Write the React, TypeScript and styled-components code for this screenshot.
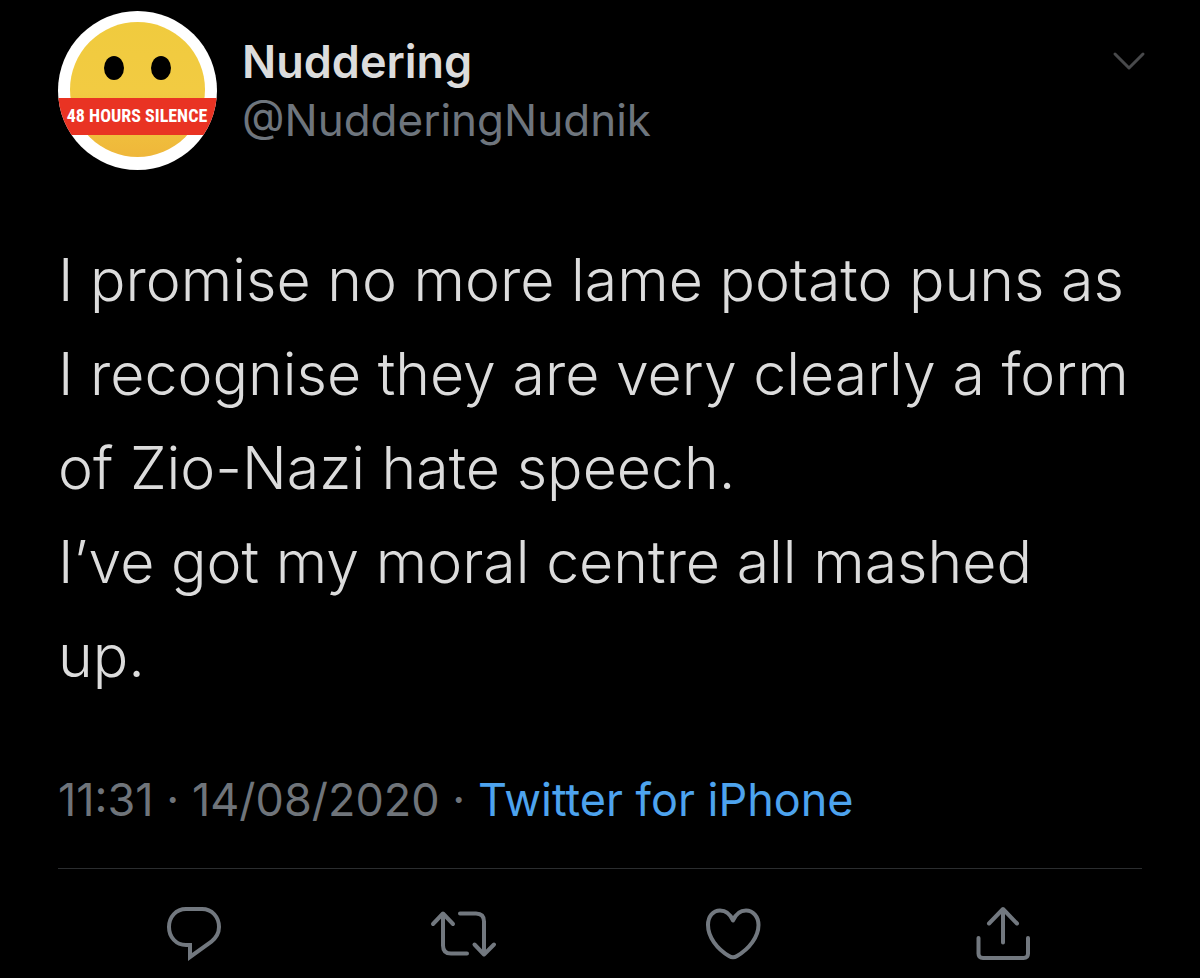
import React from "react";
import styled, { createGlobalStyle } from "styled-components";

const GlobalStyle = createGlobalStyle`
  *, *::before, *::after { box-sizing: border-box; }
  body {
    margin: 0;
    background: #000;
    font-family: Inter, "Liberation Sans", sans-serif;
  }
`;

const Tweet = styled.article`
  padding: 11px 58px 0;
  color: #dcdcdc;
`;

const Header = styled.header`
  display: flex;
  align-items: center;
  gap: 25px;
`;

const Avatar = styled.svg`
  flex: none;
  width: 159px;
  height: 159px;
`;

const BannerText = styled.text`
  font-family: "Liberation Sans Narrow", "Roboto Condensed", "Open Sans Condensed", Roboto, sans-serif;
  font-size: 18px;
  font-weight: 700;
  text-anchor: middle;
  fill: #fff;
`;

const Names = styled.div`
  flex: 1;
  min-width: 0;
  line-height: 58px;
`;

const DisplayName = styled.h1`
  margin: 0;
  font-size: 45px;
  font-weight: 600;
`;

const Handle = styled.p`
  margin: 0;
  font-size: 44px;
  color: #6e757d;
`;

const IconButton = styled.button<{ $tone?: string }>`
  display: flex;
  padding: 0;
  border: 0;
  background: none;
  color: ${({ $tone }) => $tone ?? "#72787f"};
  cursor: pointer;

  svg {
    display: block;
    overflow: visible;
    fill: none;
    stroke: currentColor;
    stroke-width: 4;
    stroke-linecap: round;
    stroke-linejoin: round;
  }
`;

const MenuSlot = styled.div`
  align-self: flex-start;
  padding-top: 35px;
`;

const Body = styled.p`
  margin: 63px 0 0;
  font-size: 59px;
  line-height: 94px;
  font-weight: 300;
`;

const Meta = styled.p`
  margin: 69px 0 0;
  padding-bottom: 40px;
  border-bottom: 1px solid #2b2d2f;
  font-size: 45px;
  line-height: 56px;
  color: #6f747a;
`;

const Source = styled.a`
  color: #4da3ee;
  text-decoration: none;
`;

const Actions = styled.footer`
  display: grid;
  grid-template-columns: repeat(4, 1fr);
  justify-items: center;
  padding: 30px 4px 0 0;
`;

const icons = [
  {
    label: "Reply",
    shape: <path d="M28 10H44C54 10 61 18 61 28C61 35 58 39 53 43L32 58V46H28C18 46 11 38 11 28C11 18 18 10 28 10Z" strokeLinejoin="miter" />,
  },
  {
    label: "Retweet",
    shape: <path d="M5 25L15 14.5L25 25M15 15V46.5Q15 54.5 23 54.5H39M32 14.5H48Q56 14.5 56 22.5V55M46.5 45.5L56 55.5L66 45.5" />,
  },
  {
    label: "Like",
    shape: <path d="M35 21.5C32 14.5 27 11.5 22 11.5C15 11.5 10 17.5 10 26C10 38 19 50 31 57Q35 59.5 39 57C51 50 60.5 38 60.5 26C60.5 17.5 55 11.5 48 11.5C43 11.5 38 14.5 35 21.5Z" />,
  },
  {
    label: "Share",
    shape: <path d="M35 43.5V10.5M21 24.5L35 10L49 24.5M10.5 39V54.5Q10.5 59 15 59H55.5Q60 59 60 54.5V39" />,
  },
];

export default function App() {
  return (
    <>
      <GlobalStyle />
      <Tweet>
        <Header>
          <Avatar viewBox="0 0 159 159" role="img" aria-label="Profile picture">
            <defs>
              <clipPath id="avatar-clip">
                <circle cx="79.5" cy="79.5" r="79.5" />
              </clipPath>
              <linearGradient id="face" x1="0" y1="0" x2="0" y2="1">
                <stop offset="0" stopColor="#f0cb3e" />
                <stop offset="0.5" stopColor="#f2cb42" />
                <stop offset="1" stopColor="#efb73a" />
              </linearGradient>
            </defs>
            <g clipPath="url(#avatar-clip)">
              <rect width="159" height="159" fill="#fff" />
              <circle cx="79.5" cy="78.5" r="67.5" fill="url(#face)" />
              <ellipse cx="56" cy="57" rx="10" ry="12" fill="#000" />
              <ellipse cx="103" cy="57" rx="10" ry="12" fill="#000" />
              <rect y="87" width="159" height="37" fill="#e93323" />
              <BannerText x="79" y="111">48 HOURS SILENCE</BannerText>
            </g>
          </Avatar>
          <Names>
            <DisplayName>Nuddering</DisplayName>
            <Handle>@NudderingNudnik</Handle>
          </Names>
          <MenuSlot>
            <IconButton type="button" aria-label="More" $tone="#48494b">
              <svg width="28" height="28" viewBox="0 0 28 28">
                <path d="M1 8L15 22L29 8" strokeWidth="3" />
              </svg>
            </IconButton>
          </MenuSlot>
        </Header>
        <Body>
          I promise no more lame potato puns as I recognise they are very clearly a form of Zio-Nazi hate speech.
          <br />
          I’ve got my moral centre all mashed
          <br />
          up.
        </Body>
        <Meta>
          11:31 · 14/08/2020 · <Source href="#">Twitter for iPhone</Source>
        </Meta>
        <Actions>
          {icons.map(({ label, shape }) => (
            <IconButton key={label} type="button" aria-label={label}>
              <svg width="70" height="70" viewBox="0 0 70 70">{shape}</svg>
            </IconButton>
          ))}
        </Actions>
      </Tweet>
    </>
  );
}
